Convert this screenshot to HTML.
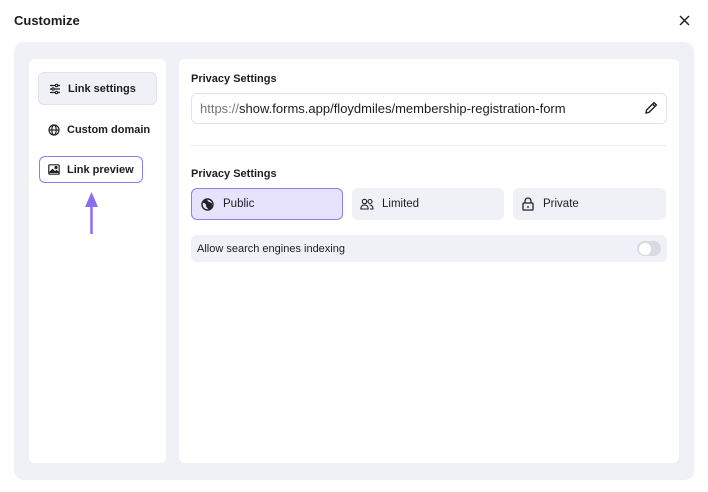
<!DOCTYPE html><html><head><style>
*{box-sizing:border-box;margin:0;padding:0}
body{width:708px;height:492px;background:#fff;font-family:"Liberation Sans",sans-serif;color:#1c1c22;position:relative;overflow:hidden}
.a{position:absolute}
.btn{position:absolute;border-radius:6px;display:flex;align-items:center;font-size:11px}
</style></head><body>
<div class="a" style="left:14px;top:13px;font-size:13px;font-weight:bold">Customize</div>
<svg class="a" style="left:679px;top:15px" width="11" height="11" viewBox="0 0 11 11"><path d="M1 1L10 10M10 1L1 10" stroke="#222" stroke-width="1.5"/></svg>
<div class="a" style="left:14px;top:42px;width:680px;height:438px;background:#f0f1f6;border-radius:10px"></div>
<div class="a" style="left:29px;top:59px;width:137px;height:404px;background:#fff;border-radius:6px"></div>
<div class="a" style="left:179px;top:59px;width:500px;height:404px;background:#fff;border-radius:6px"></div>
<div class="btn" style="left:38px;top:72px;width:119px;height:33px;background:#f0f1f6;border:1px solid #e3e4ea;font-weight:bold">
<svg style="margin:0 7px 0 10px" width="12" height="12" viewBox="0 0 12 12" fill="none" stroke="#222" stroke-width="1.2"><path d="M1 2.5h10M1 6h10M1 9.5h10"/><circle cx="7.5" cy="2.5" r="1.2" fill="#fff"/><circle cx="4" cy="6" r="1.2" fill="#fff"/><circle cx="7.5" cy="9.5" r="1.2" fill="#fff"/></svg>Link settings</div>
<div class="btn" style="left:38px;top:113px;width:125px;height:33px;font-weight:bold">
<svg style="margin:0 7px 0 10px" width="12" height="12" viewBox="0 0 12 12" fill="none" stroke="#222" stroke-width="1.2"><circle cx="6" cy="6" r="5"/><ellipse cx="6" cy="6" rx="2.2" ry="5"/><path d="M1 6h10"/></svg>Custom domain</div>
<div class="btn" style="left:39px;top:156px;width:104px;height:27px;border:1.5px solid #8b7cf0;font-weight:bold">
<svg style="margin:0 7px 0 8px" width="12" height="11" viewBox="0 0 12 11" fill="none" stroke="#222" stroke-width="1.2"><rect x="0.8" y="0.8" width="10.4" height="9.4" rx="1"/><path d="M1 9l3.5-3.5 2.5 2.5 1.5-1.5L11 9" fill="#222"/><circle cx="8" cy="3.5" r="1" fill="#222"/></svg>Link preview</div>
<svg class="a" style="left:83px;top:190px" width="17" height="46" viewBox="0 0 17 46"><path d="M8.5 14V44" stroke="#8b6cf5" stroke-width="2.5"/><path d="M2 17L8.5 2 15 17z" fill="#8b6cf5"/></svg>
<div class="a" style="left:191px;top:73px;font-size:11px;font-weight:bold">Privacy Settings</div>
<div class="a" style="left:191px;top:93px;width:476px;height:31px;border:1px solid #e3e4ea;border-radius:6px;font-size:13px;padding:7px 0 0 8px"><span style="color:#777">https://</span>show.forms.app/floydmiles/membership-registration-form</div>
<svg class="a" style="left:644px;top:101px" width="14" height="14" viewBox="0 0 14 14" fill="none" stroke="#222" stroke-width="1.4"><path d="M2 12l.6-3L10 1.6l2.4 2.4L5 11.4z M8.6 3l2.4 2.4"/></svg>
<div class="a" style="left:191px;top:145px;width:476px;height:1px;background:#ececf0"></div>
<div class="a" style="left:191px;top:168px;font-size:11px;font-weight:bold">Privacy Settings</div>
<div class="btn" style="left:191px;top:188px;width:152px;height:32px;background:#e7e3fd;border:1.5px solid #8b7cf0;font-size:11.5px">
<svg style="margin:0 9px 0 9px" width="13" height="13" viewBox="0 0 13 13"><circle cx="6.5" cy="6.5" r="5.5" fill="none" stroke="#222" stroke-width="1.4"/><path d="M2 5c2 0 3 1 3 2.5S6 10 8 11.5 11.5 8 11 6 8 4.5 7 3 5 1.5 3 3z" fill="#222"/></svg>Public</div>
<div class="btn" style="left:352px;top:188px;width:152px;height:32px;background:#f0f1f6;font-size:11.5px">
<svg style="margin:0 8px 0 8px" width="14" height="12" viewBox="0 0 14 12" fill="none" stroke="#222" stroke-width="1.1"><circle cx="4.5" cy="3.5" r="2.2"/><path d="M0.8 11c0-2.5 1.5-4 3.7-4s3.7 1.5 3.7 4z"/><circle cx="10" cy="3.5" r="2"/><path d="M9.5 7c2 0 3.5 1.3 3.5 4h-3"/></svg>Limited</div>
<div class="btn" style="left:513px;top:188px;width:153px;height:32px;background:#f0f1f6;font-size:11.5px">
<svg style="margin:0 9px 0 9px" width="12" height="14" viewBox="0 0 12 14" fill="none" stroke="#222" stroke-width="1.3"><rect x="1" y="6" width="10" height="7" rx="0.8"/><path d="M3 6V4a3 3 0 0 1 6 0v2M6 9v2"/></svg>Private</div>
<div class="btn" style="left:191px;top:235px;width:476px;height:27px;background:#f0f1f6;padding-left:6px">Allow search engines indexing
<div class="a" style="left:446px;top:6px;width:24px;height:15px;border-radius:8px;background:#d9dae2"><div class="a" style="left:1.5px;top:1.5px;width:12px;height:12px;border-radius:50%;background:#fff"></div></div></div>
</body></html>
